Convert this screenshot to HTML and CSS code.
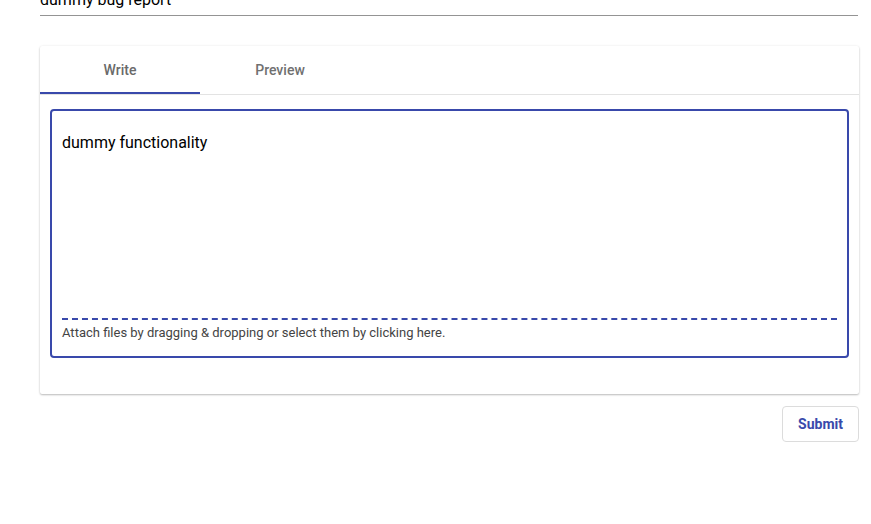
FILE: index.html
```html
<!DOCTYPE html>
<html>
<head>
<meta charset="utf-8">
<link rel="stylesheet" href="styles.css">
</head>
<body>
<div class="page">
  <div class="title-field">
    <div class="title-text">dummy bug report</div>
  </div>
  <div class="card">
    <div class="tabs">
      <div class="tab active">Write</div>
      <div class="tab">Preview</div>
    </div>
    <div class="card-body">
      <div class="editor">
        <div class="editor-text">dummy functionality</div>
        <div class="attach">Attach files by dragging &amp; dropping or select them by clicking here.</div>
      </div>
    </div>
  </div>
  <div class="actions">
    <button class="submit">Submit</button>
  </div>
</div>
</body>
</html>
```

FILE: styles.css
```css
* { box-sizing: border-box; }
html, body { margin: 0; padding: 0; background: #fff; overflow: hidden; }
body { font-family: Roboto, "Liberation Sans", sans-serif; color: #000; }
.page { padding: 0 12px 0 40px; width: 871px; }
.title-field {
  margin-top: -10px;
  height: 26px;
  border-bottom: 1px solid #949494;
  margin-right: 1px;
}
.title-text { font-size: 16px; line-height: 19px; }
.card {
  margin-top: 30px;
  background: #fff;
  box-shadow: 0 1px 2px rgba(0,0,0,0.25), 0 0 3px rgba(0,0,0,0.06);
  border-radius: 2px;
}
.tabs {
  display: flex;
  height: 49px;
  border-bottom: 1px solid #e3e3e3;
}
.tab {
  width: 160px;
  display: flex;
  align-items: center;
  justify-content: center;
  font-size: 14px;
  font-weight: 500;
  color: #707070;
  padding-top: 1px;
  border-bottom: 2px solid transparent;
}
.tab.active { border-bottom-color: #3949ab; color: #6a6a6a; }
.card-body { padding: 14px 10px 36px 10px; }
.editor {
  height: 249px;
  border: 2px solid #3949ab;
  border-radius: 4px;
  padding: 22px 10px 0 10px;
  display: flex;
  flex-direction: column;
}
.editor-text { font-size: 16px; line-height: 20px; flex: 1; }
.attach {
  border-top: 2px dashed #3949ab;
  font-size: 13px;
  line-height: 15px;
  color: #444;
  padding-top: 5px;
  height: 38px;
}
.actions {
  display: flex;
  justify-content: flex-end;
  margin-top: 12px;
}
.submit {
  width: 77px;
  height: 36px;
  border: 1px solid #dcdcdc;
  border-radius: 4px;
  background: #fff;
  color: #3949ab;
  font-family: Roboto, "Liberation Sans", sans-serif;
  font-size: 14px;
  font-weight: 700;
  padding: 0;
}
```
